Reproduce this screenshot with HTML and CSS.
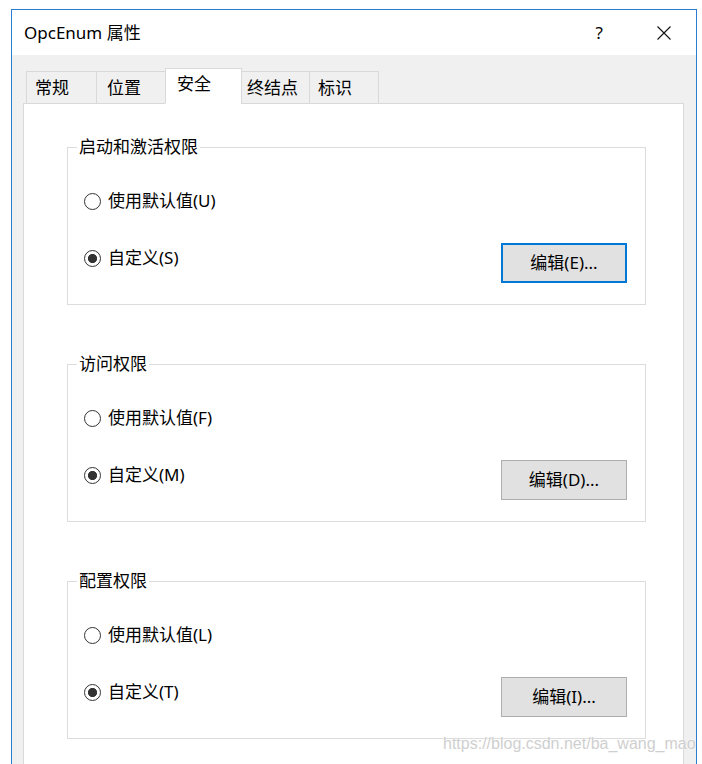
FILE: index.html
```html
<!DOCTYPE html>
<html lang="zh-CN">
<head>
<meta charset="utf-8">
<title>OpcEnum 属性</title>
<link rel="stylesheet" href="styles.css">
</head>
<body>
<div class="window">
  <div class="titlebar">
    <span class="title">OpcEnum 属性</span>
    <span class="help">?</span>
    <span class="close"><svg width="14" height="14" viewBox="0 0 14 14"><path d="M0.5 0.5 L13.5 13.5 M13.5 0.5 L0.5 13.5" stroke="#111" stroke-width="1.1" fill="none"/></svg></span>
  </div>
  <div class="client">
    <div class="tabs">
      <div class="tab t1">常规</div>
      <div class="tab t2">位置</div>
      <div class="tab t3 active">安全</div>
      <div class="tab t4">终结点</div>
      <div class="tab t5">标识</div>
    </div>
    <div class="panel">
      <div class="group">
        <div class="legend">启动和激活权限</div>
        <div class="radio first"><span class="dot"></span>使用默认值(U)</div>
        <div class="row2">
          <div class="radio checked"><span class="dot"></span>自定义(S)</div>
          <button class="btn focus">编辑(E)...</button>
        </div>
      </div>
      <div class="group">
        <div class="legend">访问权限</div>
        <div class="radio first"><span class="dot"></span>使用默认值(F)</div>
        <div class="row2">
          <div class="radio checked"><span class="dot"></span>自定义(M)</div>
          <button class="btn">编辑(D)...</button>
        </div>
      </div>
      <div class="group last">
        <div class="legend">配置权限</div>
        <div class="radio first"><span class="dot"></span>使用默认值(L)</div>
        <div class="row2">
          <div class="radio checked"><span class="dot"></span>自定义(T)</div>
          <button class="btn">编辑(I)...</button>
        </div>
      </div>
    </div>
  </div>
</div>
<div class="watermark">https://blog.csdn.net/ba_wang_mao</div>
</body>
</html>
```
FILE: styles.css
```css
html, body {
  margin: 0;
  height: 764px;
  overflow: hidden;
  background: #fff;
}
body {
  font-family: "Noto Sans", "Noto Sans CJK SC", sans-serif;
  font-size: 17px;
  color: #000;
  position: relative;
}
.window {
  margin: 9px 0 0 11px;
  width: 686px;
  height: 755px;
  box-sizing: border-box;
  border: 1px solid #2b7cd3;
  border-bottom: none;
  background: #f0f0f0;
  display: flex;
  flex-direction: column;
}
.titlebar {
  flex: none;
  height: 45px;
  background: #fff;
  display: flex;
  align-items: center;
  padding-left: 12px;
}
.title {
  flex: 1;
  line-height: 20px;
}
.help {
  line-height: 20px;
  margin-right: 54px;
}
.close {
  display: flex;
  margin-right: 25px;
}
.client {
  flex: 1;
  min-height: 0;
  display: flex;
  flex-direction: column;
  padding: 13px 12px 0 11px;
}
.tabs {
  flex: none;
  display: flex;
  align-items: flex-end;
  height: 36px;
  padding-left: 3px;
  margin-bottom: -1px;
  position: relative;
  z-index: 1;
}
.tab {
  box-sizing: border-box;
  height: 33px;
  border: 1px solid #d9d9d9;
  background: #f0f0f0;
  margin-right: -1px;
  padding: 2px 0 0 8px;
  line-height: 28px;
}
.t1 { width: 71px; }
.t2 { width: 71px; padding-left: 10px; }
.t3 { width: 77px; }
.t4 { width: 69px; padding-left: 5px; }
.t5 { width: 70px; padding-left: 8px; }
.tab.active {
  height: 36px;
  margin-left: -1px;
  background: #fff;
  border-bottom-color: #fff;
  padding: 1px 0 0 11px;
}
.panel {
  flex: 1;
  min-height: 0;
  overflow: hidden;
  background: #fff;
  border: 1px solid #d9d9d9;
  border-bottom: none;
  padding: 43px 37px 0 43px;
}
.group {
  box-sizing: border-box;
  height: 158px;
  border: 1px solid #dcdcdc;
  padding: 0 18px 0 16px;
  margin-bottom: 59px;
}
.group.last {
  margin-bottom: 0;
}
.legend {
  width: fit-content;
  height: 20px;
  line-height: 20px;
  margin: -11px 0 0 -7px;
  padding: 0 2px;
  background: #fff;
}
.radio {
  display: flex;
  align-items: center;
  height: 20px;
  line-height: 20px;
}
.radio.first {
  margin-top: 34px;
}
.row2 {
  display: flex;
  justify-content: space-between;
  align-items: flex-start;
  margin-top: 32px;
}
.row2 .radio {
  margin-top: 5px;
}
.dot {
  flex: none;
  box-sizing: border-box;
  width: 17px;
  height: 17px;
  border: 1px solid #333;
  border-radius: 50%;
  margin-right: 7px;
  background: #fff;
}
.checked .dot {
  background: radial-gradient(circle, #333 0, #333 4.2px, #fff 5px);
}
.btn {
  box-sizing: border-box;
  width: 126px;
  height: 40px;
  padding: 0;
  border: 1px solid #adadad;
  background: #e1e1e1;
  font: inherit;
  color: #000;
  line-height: 20px;
}
.btn.focus {
  border: 2px solid #0078d7;
}
.watermark {
  position: absolute;
  left: 443px;
  top: 735px;
  font-family: "Liberation Sans", sans-serif;
  font-size: 16px;
  line-height: 18px;
  color: #cfcfcf;
  text-shadow: 0 0 2px #fff;
}
```
